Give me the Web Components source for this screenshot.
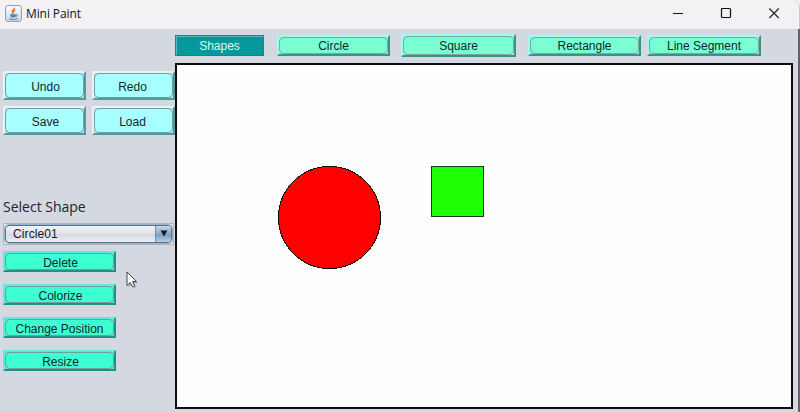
<!DOCTYPE html>
<html lang="en">
<head>
<meta charset="utf-8">
<title>Mini Paint</title>
<style>
html, body { margin: 0; width: 800px; height: 412px; overflow: hidden; background: #f3f1f4; }
</style>
</head>
<body>
<paint-app></paint-app>
<script>
function define(name, html) {
  const t = document.createElement('template');
  t.innerHTML = html;
  customElements.define(name, class extends HTMLElement {
    constructor() {
      super();
      this.attachShadow({ mode: 'open' }).appendChild(t.content.cloneNode(true));
    }
  });
}

/* Window title bar: Java icon, caption, window controls */
define('title-bar', `
<style>
:host { display: flex; align-items: center; height: 29px; box-sizing: border-box; background: #f3f1f4; padding: 0 18px 2px 5px; border-radius: 0 7px 0 0; border-right: 1px solid #c9c8cc; }
.cap { font: 12px/16px "Open Sans", "Noto Sans", sans-serif; color: #141414; margin-left: 4px; flex: 1; letter-spacing: -.1px; }
svg { display: block; }
.controls { display: flex; gap: 36px; padding-right: 1px; }
.controls svg { position: relative; top: -1px; }
</style>
<svg width="17" height="17" viewBox="0 0 17 17">
  <defs><linearGradient id="g" x2="0" y2="1"><stop offset="0" stop-color="#fdfeff"/><stop offset="1" stop-color="#c9d8e4"/></linearGradient></defs>
  <rect x=".6" y=".6" width="15.8" height="15.8" rx="2" fill="url(#g)" stroke="#8d9cab"/>
  <path d="M9.4 2.6C10 4.8 6.4 5.4 7.2 7.2c.3.7.8 1 .9 1.8M10.4 5.2C8 6.1 8.5 6.8 9 7.6" fill="none" stroke="#e57a38" stroke-width="1.4"/>
  <path d="M5 9.3h6.1c-.2 1.8-.7 2.7-1.3 3.2H6.3C5.6 12 5.1 10.7 5 9.3z" fill="#587f9f"/>
  <path d="M11 9.7c2-.5 1.600 1.700-.5 1.800M4 13.700c2.300 1 6.700 1 9-.1" fill="none" stroke="#587f9f"/>
</svg>
<span class="cap"><slot></slot></span>
<div class="controls">
  <svg width="12" height="12"><path d="M1 6.500h10" stroke="#222" stroke-width="1.100"/></svg>
  <svg width="12" height="12"><rect x="1.500" y="1.500" width="9" height="9" rx="1" fill="none" stroke="#111" stroke-width="1.200"/></svg>
  <svg width="12" height="12"><path d="M1.300 1.500l9.500 9.500M10.800 1.500L1.300 11" stroke="#222" stroke-width="1.100"/></svg>
</div>`);

/* Raised button with an inner rounded outline */
define('bevel-button', `
<style>
:host { display: block; flex: none; box-sizing: border-box; position: relative; width: var(--w, 113px); height: var(--h, 21px);
  border-style: solid; border-width: 2px; border-color: var(--hi, #a2f8f2) var(--lo, #3d9383) var(--lo, #3d9383) var(--hi, #a2f8f2);
  background: var(--halo, #a1e2d3); }
.in { box-sizing: border-box; width: 100%; height: 100%; border: 1px solid var(--line, #78a99f); border-radius: 5px;
  display: flex; align-items: center; justify-content: center; background: var(--face, #7affd2); }
span { font: 12px/14px "Liberation Sans", Arial, sans-serif; color: #10282c; white-space: nowrap; position: relative; top: 1px; left: var(--tx, 0px); }
</style>
<div class="in"><span><slot></slot></span></div>`);

define('section-tag', `
<style>
:host { display: flex; flex: none; box-sizing: border-box; width: 89px; height: 21px; align-items: center; justify-content: center; background: #06989a;
  border: 1px solid #267f85; box-shadow: inset 1px 1px #52b9b9; font: 12px/14px "Liberation Sans", Arial, sans-serif; color: #d2fbf6; padding: 2px 0 0 0; }
</style><slot></slot>`);

define('shape-select', `
<style>
:host { display: block; box-sizing: border-box; width: 171px; height: 22px; border: 1px solid #aeb5bd; background: #e7e9ed; padding: 1px; }
.box { display: flex; box-sizing: border-box; height: 18px; width: 167px; border: 1px solid #55718d; border-radius: 4px; overflow: hidden; box-shadow: 0 0 0 1px #9eb2c5;
  background: linear-gradient(#f3f4f7, #e0e3e9 48%, #d3d8df 50%, #ecf0f4); }
.t { flex: 1; padding-left: 7px; font: 12px/17px "Liberation Sans", Arial, sans-serif; color: #16161c; letter-spacing: .1px; }
.a { width: 15px; border-left: 1px solid #7590aa; background: linear-gradient(#c9d7e5, #8eaac5 48%, #7c9cba 52%, #b3cde2); display: flex; align-items: center; justify-content: center; }
.a svg { margin-top: -2px; }
</style>
<div class="box"><span class="t"><slot></slot></span><span class="a"><svg width="8" height="7"><path d="M.5 .5h7L4 6.500z" fill="#151a22"/></svg></span></div>`);

define('draw-canvas', `
<style>
:host { display: block; box-sizing: border-box; width: 618px; height: 346px; border: 2px solid #0d0d12; background: #fffeff; }
svg { display: block; }
</style>
<svg width="614" height="342" shape-rendering="crispEdges">
  <circle cx="152.500" cy="152.500" r="51" fill="#f00" stroke="#101010"/>
  <rect x="254.500" y="101.500" width="52" height="50" fill="#1cff05" stroke="#143c14"/>
</svg>`);

define('side-panel', `
<style>
:host { display: flex; flex-direction: column; flex: none; box-sizing: border-box; width: 175px; padding: 42px 0 0 3px; }
.grid { display: grid; grid-template-columns: 83px 83px; gap: 6px; --w: 83px; --h: 29px; --hi: #ecf1f4; --lo: #559a9b; --face: #a8ffff; --line: #6b9da2; --halo: #c0dbdf; }
.grid bevel-button:nth-child(odd) { --tx: 1px; }
.grid bevel-button:nth-child(even) { --tx: -1px; }
.label { font: 14px/20px "Open Sans", "Noto Sans", sans-serif; color: #23232b; margin: 62px 0 6px; }
.ops { display: flex; flex-direction: column; gap: 12px; margin-top: 6px; --face: #3effd2; --hi: #5ceae4; --lo: #239080; --line: #719f98; --halo: #73d6c6; --tx: 1px; }
</style>
<div class="grid">
  <bevel-button>Undo</bevel-button><bevel-button>Redo</bevel-button>
  <bevel-button>Save</bevel-button><bevel-button>Load</bevel-button>
</div>
<div class="label">Select Shape</div>
<shape-select>Circle01</shape-select>
<div class="ops">
  <bevel-button>Delete</bevel-button><bevel-button>Colorize</bevel-button>
  <bevel-button style="--tx:0px">Change Position</bevel-button><bevel-button>Resize</bevel-button>
</div>`);

define('shape-bar', `
<style>
:host { display: flex; align-items: center; height: 22px; padding: 5px 0 7px; }
bevel-button { margin-left: 12px; }
.first { margin-left: 13px; }
.sq { margin-left: 11px; --w: 115px; --h: 23px; }
.last { margin-left: 6px; --w: 114px; }
</style>
<section-tag>Shapes</section-tag>
<bevel-button class="first">Circle</bevel-button><bevel-button class="sq">Square</bevel-button>
<bevel-button>Rectangle</bevel-button><bevel-button class="last">Line Segment</bevel-button>`);

define('mouse-pointer', `
<style>:host { display: block; position: absolute; left: 126px; top: 271px; } svg { display: block; }</style>
<svg width="14" height="20"><path d="M2.500 2.500v14l3.200-3 2.200 4 2.300-1.200-2.100-4h4z" fill="#888" opacity=".45"/>
<path d="M1 1v13.500l3.200-3 2.200 4.300 2.200-1.200-2.100-4h4z" fill="#fff" stroke="#333" stroke-width=".9"/></svg>`);

define('paint-app', `
<style>
:host { display: flex; flex-direction: column; width: 800px; height: 412px; position: relative; }
.body { display: flex; flex: 1; box-sizing: border-box; background: #d4d8e0; border-right: 2px solid #62636b; }
</style>
<title-bar>Mini Paint</title-bar>
<div class="body">
  <side-panel></side-panel>
  <div><shape-bar></shape-bar><draw-canvas></draw-canvas></div>
</div>
<mouse-pointer></mouse-pointer>`);
</script>
</body>
</html>
